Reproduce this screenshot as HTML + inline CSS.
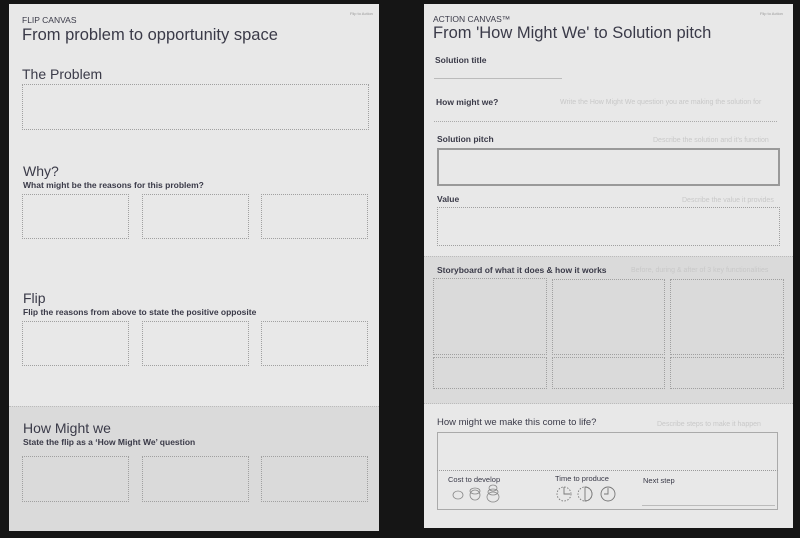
<!DOCTYPE html><html><head><meta charset="utf-8"><style>
*{margin:0;padding:0;box-sizing:border-box}
body{width:800px;height:538px;background:#151515;position:relative;overflow:hidden;font-family:"Liberation Sans",sans-serif;color:#3a3a48}
.a{position:absolute}
.pg{background:#e8e8e8}
.sh{background:#dadada}
.bx{position:absolute;border:1px dotted #a0a0a0}
.t{position:absolute;white-space:nowrap}
.h{font-size:14px}
.s{font-size:8.5px;font-weight:bold}
.l{font-size:8.5px;font-weight:bold}
.hint{font-size:7px;color:#c8c8c8;position:absolute;white-space:nowrap}
</style></head><body>
<div class="a pg" style="left:9px;top:4px;width:370px;height:527px"></div>
<div class="a sh" style="left:9px;top:406px;width:370px;height:125px;border-top:1px dotted #bbb"></div>
<div class="t" style="left:22px;top:15px;font-size:8.5px">FLIP CANVAS</div>
<div class="t" style="left:22px;top:26px;font-size:16.5px">From problem to opportunity space</div>
<div class="t" style="left:350px;top:11px;font-size:4px;color:#999">Flip to Action</div>
<div class="t h" style="left:22px;top:66px">The Problem</div>
<div class="bx" style="left:22px;top:84px;width:347px;height:46px"></div>
<div class="t h" style="left:23px;top:163px">Why?</div>
<div class="t s" style="left:23px;top:180px">What might be the reasons for this problem?</div>
<div class="bx" style="left:22px;top:194px;width:107px;height:45px"></div>
<div class="bx" style="left:142px;top:194px;width:107px;height:45px"></div>
<div class="bx" style="left:261px;top:194px;width:107px;height:45px"></div>
<div class="t h" style="left:23px;top:290px">Flip</div>
<div class="t s" style="left:23px;top:307px">Flip the reasons from above to state the positive opposite</div>
<div class="bx" style="left:22px;top:321px;width:107px;height:45px"></div>
<div class="bx" style="left:142px;top:321px;width:107px;height:45px"></div>
<div class="bx" style="left:261px;top:321px;width:107px;height:45px"></div>
<div class="t h" style="left:23px;top:420px">How Might we</div>
<div class="t s" style="left:23px;top:437px">State the flip as a ‘How Might We’ question</div>
<div class="bx" style="left:22px;top:456px;width:107px;height:46px"></div>
<div class="bx" style="left:142px;top:456px;width:107px;height:46px"></div>
<div class="bx" style="left:261px;top:456px;width:107px;height:46px"></div>

<div class="a pg" style="left:424px;top:4px;width:369px;height:524px"></div>
<div class="a sh" style="left:424px;top:256px;width:369px;height:148px;border-top:1px dotted #bbb;border-bottom:1px dotted #bbb"></div>
<div class="t" style="left:433px;top:14px;font-size:8.5px">ACTION CANVAS™</div>
<div class="t" style="left:433px;top:24px;font-size:16.5px">From 'How Might We' to Solution pitch</div>
<div class="t" style="left:760px;top:11px;font-size:4px;color:#999">Flip to Action</div>
<div class="t l" style="left:435px;top:55px">Solution title</div>
<div class="a" style="left:434px;top:78px;width:128px;border-top:1px solid #bbb"></div>
<div class="t l" style="left:436px;top:97px">How might we?</div>
<div class="hint" style="left:560px;top:99px">Write the How Might We question you are making the solution for</div>
<div class="a" style="left:434px;top:121px;width:343px;border-top:1px dotted #aaa"></div>
<div class="t l" style="left:437px;top:134px">Solution pitch</div>
<div class="hint" style="left:653px;top:137px">Describe the solution and it's function</div>
<div class="a" style="left:437px;top:148px;width:343px;height:38px;border:2px solid #999"></div>
<div class="t l" style="left:437px;top:194px">Value</div>
<div class="hint" style="left:682px;top:197px">Describe the value it provides</div>
<div class="bx" style="left:437px;top:207px;width:343px;height:39px"></div>
<div class="t l" style="left:437px;top:265px">Storyboard of what it does &amp; how it works</div>
<div class="hint" style="left:631px;top:267px">Before, during &amp; after of 3 key functionalities</div>
<div class="bx" style="left:433px;top:278px;width:114px;height:77px"></div>
<div class="bx" style="left:552px;top:279px;width:113px;height:76px"></div>
<div class="bx" style="left:670px;top:279px;width:114px;height:76px"></div>
<div class="bx" style="left:433px;top:357px;width:114px;height:32px"></div>
<div class="bx" style="left:552px;top:357px;width:113px;height:32px"></div>
<div class="bx" style="left:670px;top:357px;width:114px;height:32px"></div>
<div class="t" style="left:437px;top:417px;font-size:9.5px">How might we make this come to life?</div>
<div class="hint" style="left:657px;top:421px">Describe steps to make it happen</div>
<div class="a" style="left:437px;top:432px;width:341px;height:78px;border:1px solid #aaa"></div>
<div class="a" style="left:437px;top:470px;width:341px;border-top:1px dotted #999"></div>
<div class="t" style="left:448px;top:475px;font-size:7.5px">Cost to develop</div>
<div class="t" style="left:555px;top:474px;font-size:7.5px">Time  to produce</div>
<div class="t" style="left:643px;top:476px;font-size:7.5px">Next step</div>
<div class="a" style="left:642px;top:505px;width:133px;border-top:1px solid #bbb"></div>
<svg class="a" style="left:450px;top:484px" width="60" height="20" fill="none" stroke="#888" stroke-width="0.8">
<ellipse cx="8" cy="11" rx="5" ry="4"/><ellipse cx="25" cy="11" rx="5" ry="5"/><ellipse cx="25" cy="7" rx="5" ry="3"/>
<ellipse cx="43" cy="13" rx="6" ry="5"/><ellipse cx="43" cy="8" rx="5" ry="3"/><ellipse cx="43" cy="4" rx="4" ry="3"/></svg>
<svg class="a" style="left:555px;top:484px" width="66" height="20" fill="none" stroke="#777" stroke-width="0.9">
<circle cx="9" cy="10" r="7" stroke-dasharray="1.5 1.5"/><path d="M9 3v7h6"/>
<circle cx="30" cy="10" r="7" stroke-dasharray="1.5 1.5"/><path d="M30 3a7 7 0 0 1 0 14z"/>
<circle cx="53" cy="10" r="7"/><path d="M53 4v6h-4"/></svg>
</body></html>
